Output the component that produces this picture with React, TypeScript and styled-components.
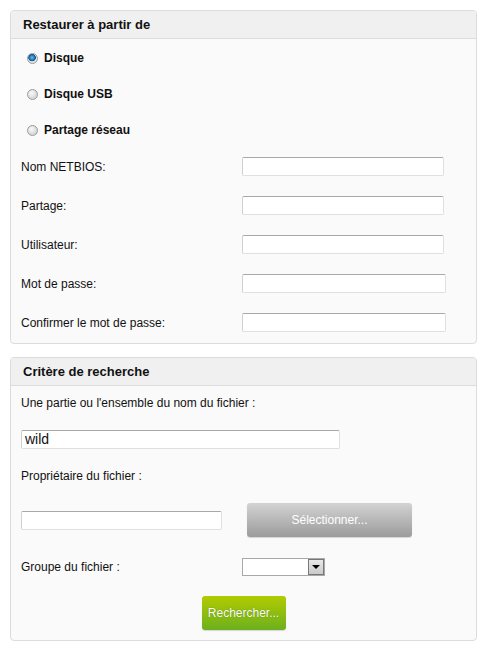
import React from 'react';
import styled, { createGlobalStyle } from 'styled-components';

const GlobalStyle = createGlobalStyle`
  body {
    margin: 0;
    background: #fff;
    font-family: "Liberation Sans", Arial, sans-serif;
    font-size: 12px;
    color: #111;
  }
`;

const Page = styled.div`
  padding: 10px 10px 0 10px;
  width: 467px;
`;

const Panel = styled.section<{ $gap?: number }>`
  margin-top: ${(p) => p.$gap || 0}px;
  border: 1px solid #dcdcdc;
  border-radius: 4px;
  background: #fafafa;
  overflow: hidden;
`;

const PanelHeader = styled.h2`
  margin: 0;
  height: 27px;
  line-height: 27px;
  padding-left: 12px;
  background: #f0f0f0;
  border-bottom: 1px solid #dcdcdc;
  font-size: 13px;
  font-weight: bold;
  color: #111;
`;

const RadioList = styled.div`
  padding: 1px 0 0 16px;
`;

const RadioRow = styled.label`
  display: flex;
  align-items: center;
  height: 36px;
  gap: 6px;
  font-weight: bold;
  font-size: 12px;
`;

const RadioDot = styled.span<{ $checked?: boolean }>`
  width: 11px;
  height: 11px;
  box-sizing: border-box;
  border-radius: 50%;
  border: 1px solid #9a9a9a;
  background: ${(p) =>
    p.$checked
      ? 'radial-gradient(circle at 45% 40%, #6fc0f0 0, #1f74b8 2.5px, #0b4f8a 3.5px, #e8e8e8 4px, #cfcfcf 100%)'
      : 'radial-gradient(circle at 40% 35%, #fafafa 0, #e6e6e6 3px, #c8c8c8 100%)'};
`;

const FormGrid = styled.div`
  margin-top: -1px;
  padding: 0 0 1px 10px;
`;

const FormRow = styled.div`
  display: grid;
  grid-template-columns: 221px 1fr;
  align-items: center;
  height: 39px;
`;

const Label = styled.span`
  font-size: 12px;
  color: #111;
`;

const TextInput = styled.div<{ $w: number }>`
  width: ${(p) => p.$w}px;
  height: 19px;
  box-sizing: border-box;
  background: #fff;
  border: 1px solid #e0e0e0;
  border-top-color: #a8a8a8;
  border-left-color: #d0d0d0;
  border-radius: 2px;
  padding-left: 3px;
  font-size: 14px;
  line-height: 17px;
  color: #111;
`;

const SearchBody = styled.div`
  padding: 9px 10px 10px 10px;
  display: flex;
  flex-direction: column;
`;

const BlockLabel = styled.div<{ $top?: number }>`
  margin-top: ${(p) => p.$top || 0}px;
  line-height: 16px;
  font-size: 12px;
`;

const Spaced = styled.div<{ $top: number }>`
  margin-top: ${(p) => p.$top}px;
`;

const OwnerRow = styled.div`
  margin-top: 19px;
  display: flex;
  align-items: center;
  gap: 25px;
`;

const GrayButton = styled.button`
  width: 165px;
  height: 34px;
  border: none;
  border-radius: 3px;
  background: linear-gradient(#d3d3d3, #9b9b9b);
  color: #fff;
  font-family: "Liberation Sans", Arial, sans-serif;
  font-size: 12px;
  box-shadow: 0 1px 1px rgba(0, 0, 0, 0.15);
`;

const GroupRow = styled.div`
  margin-top: 21px;
  display: grid;
  grid-template-columns: 221px auto;
  align-items: center;
`;

const Select = styled.div`
  width: 83px;
  height: 18px;
  box-sizing: border-box;
  border: 1px solid #a8a8a8;
  background: #fff;
  display: flex;
  justify-content: flex-end;
`;

const SelectArrow = styled.span`
  width: 16px;
  height: 16px;
  box-sizing: border-box;
  border: 1px solid #777;
  background: linear-gradient(#e8e8e8, #cacaca);
  display: flex;
  align-items: center;
  justify-content: center;
  &::after {
    content: '';
    border-left: 4px solid transparent;
    border-right: 4px solid transparent;
    border-top: 4px solid #000;
  }
`;

const GreenButton = styled.button`
  margin: 20px auto 0;
  width: 84px;
  height: 34px;
  border: none;
  border-radius: 3px;
  background: linear-gradient(#b2cb00, #6cb01e);
  color: #fff;
  font-family: "Liberation Sans", Arial, sans-serif;
  font-size: 12px;
  text-shadow: 0 0 1px rgba(40, 80, 0, 0.6);
  box-shadow: 0 1px 1px rgba(0, 0, 0, 0.15);
`;

const sources = [
  { label: 'Disque', checked: true },
  { label: 'Disque USB' },
  { label: 'Partage réseau' },
];

const fields = [
  { label: 'Nom NETBIOS:', w: 202 },
  { label: 'Partage:', w: 202 },
  { label: 'Utilisateur:', w: 202 },
  { label: 'Mot de passe:', w: 204 },
  { label: 'Confirmer le mot de passe:', w: 204 },
];

const App = () => (
  <Page>
    <GlobalStyle />
    <Panel>
      <PanelHeader>Restaurer à partir de</PanelHeader>
      <RadioList>
        {sources.map((s) => (
          <RadioRow key={s.label}>
            <RadioDot $checked={s.checked} />
            {s.label}
          </RadioRow>
        ))}
      </RadioList>
      <FormGrid>
        {fields.map((f) => (
          <FormRow key={f.label}>
            <Label>{f.label}</Label>
            <TextInput $w={f.w} />
          </FormRow>
        ))}
      </FormGrid>
    </Panel>

    <Panel $gap={13}>
      <PanelHeader>Critère de recherche</PanelHeader>
      <SearchBody>
        <BlockLabel>Une partie ou l'ensemble du nom du fichier :</BlockLabel>
        <Spaced $top={19}>
          <TextInput $w={319}>wild</TextInput>
        </Spaced>
        <BlockLabel $top={19}>Propriétaire du fichier :</BlockLabel>
        <OwnerRow>
          <TextInput $w={201} />
          <GrayButton>Sélectionner...</GrayButton>
        </OwnerRow>
        <GroupRow>
          <Label>Groupe du fichier :</Label>
          <Select>
            <SelectArrow />
          </Select>
        </GroupRow>
        <GreenButton>Rechercher...</GreenButton>
      </SearchBody>
    </Panel>
  </Page>
);

export default App;
